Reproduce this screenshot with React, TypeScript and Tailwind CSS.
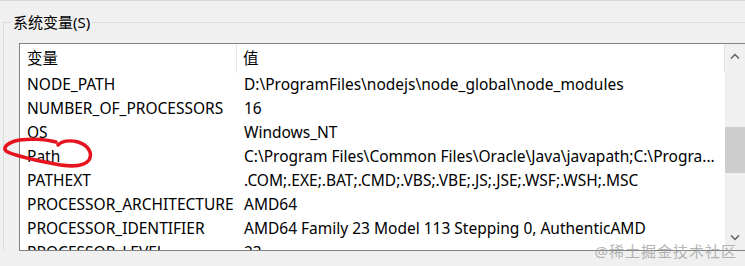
import React from "react";

const rows: [string, string][] = [
  ["NODE_PATH", "D:\\ProgramFiles\\nodejs\\node_global\\node_modules"],
  ["NUMBER_OF_PROCESSORS", "16"],
  ["OS", "Windows_NT"],
  ["Path", "C:\\Program Files\\Common Files\\Oracle\\Java\\javapath;C:\\Progra..."],
  ["PATHEXT", ".COM;.EXE;.BAT;.CMD;.VBS;.VBE;.JS;.JSE;.WSF;.WSH;.MSC"],
  ["PROCESSOR_ARCHITECTURE", "AMD64"],
  ["PROCESSOR_IDENTIFIER", "AMD64 Family 23 Model 113 Stepping 0, AuthenticAMD"],
  ["PROCESSOR_LEVEL", "23"],
];

export default function App() {
  return (
    <div
      className="relative w-[745px] h-[266px] overflow-hidden bg-[#f0f0f0] border-t border-[#d9d9d9] text-[15.5px] text-black"
      style={{ fontFamily: '"Noto Sans", "Noto Sans CJK SC", sans-serif' }}
    >
      <div className="pt-[21px] pl-[3px]">
        {/* group box */}
        <div className="relative border-l border-t border-[#dcdcdc] pl-[15px] pt-[20px]">
          <span className="absolute -top-[13px] left-[7px] bg-[#f0f0f0] px-[2px] leading-[24px] text-[15px]">
            系统变量(S)
          </span>

          {/* list box */}
          <div className="flex h-[208px] bg-white border-y border-l border-[#828282]">
            <div className="w-[705px] overflow-hidden">
              <div className="flex h-[29px] items-center">
                <div className="w-[217px] h-full flex items-center pl-[7px] border-r border-[#e5e5e5]">变量</div>
                <div className="flex-1 h-full flex items-center pl-[6px] border-r border-[#e5e5e5]">值</div>
              </div>
              {rows.map(([name, value]) => (
                <div key={name} className="flex h-[24px] items-center whitespace-nowrap">
                  <div className="w-[218px] pl-[7px]">{name}</div>
                  <div className="flex-1 pl-[6px]">{value}</div>
                </div>
              ))}
            </div>

            {/* scrollbar */}
            <div className="flex-1 flex flex-col bg-[#f0f0f0]">
              <div className="h-[24px] flex items-center justify-center text-[#606060]">
                <svg width="10" height="6" viewBox="0 0 10 6">
                  <path d="M1 5.5 L5 1.5 L9 5.5" fill="none" stroke="currentColor" strokeWidth="1.5" />
                </svg>
              </div>
              <div className="h-[59px]" />
              <div className="h-[46px] bg-[#cdcdcd]" />
              <div className="flex-1" />
              <div className="h-[24px] flex items-center justify-center text-[#606060]">
                <svg width="10" height="6" viewBox="0 0 10 6">
                  <path d="M1 0.5 L5 4.5 L9 0.5" fill="none" stroke="currentColor" strokeWidth="1.5" />
                </svg>
              </div>
            </div>
          </div>
        </div>
      </div>

      {/* red annotation circle */}
      <svg className="absolute left-0 top-0 pointer-events-none" width="120" height="200" viewBox="0 0 120 200">
        <path
          d="M56 141 C45 138 25 137 15 140 C6 143 3 147 6 150 C12 154 30 158 50 162 C68 166 84 166 89 159 C93 152 88 144 78 141 C70 139 62 140 58 144"
          fill="none"
          stroke="#e5141e"
          strokeWidth="3.5"
          strokeLinecap="round"
        />
      </svg>

      {/* watermark */}
      <div className="absolute right-[8px] top-[239px] text-[15px] text-[#a0a0a0]/80 tracking-[1px]">
        @稀土掘金技术社区
      </div>
    </div>
  );
}
